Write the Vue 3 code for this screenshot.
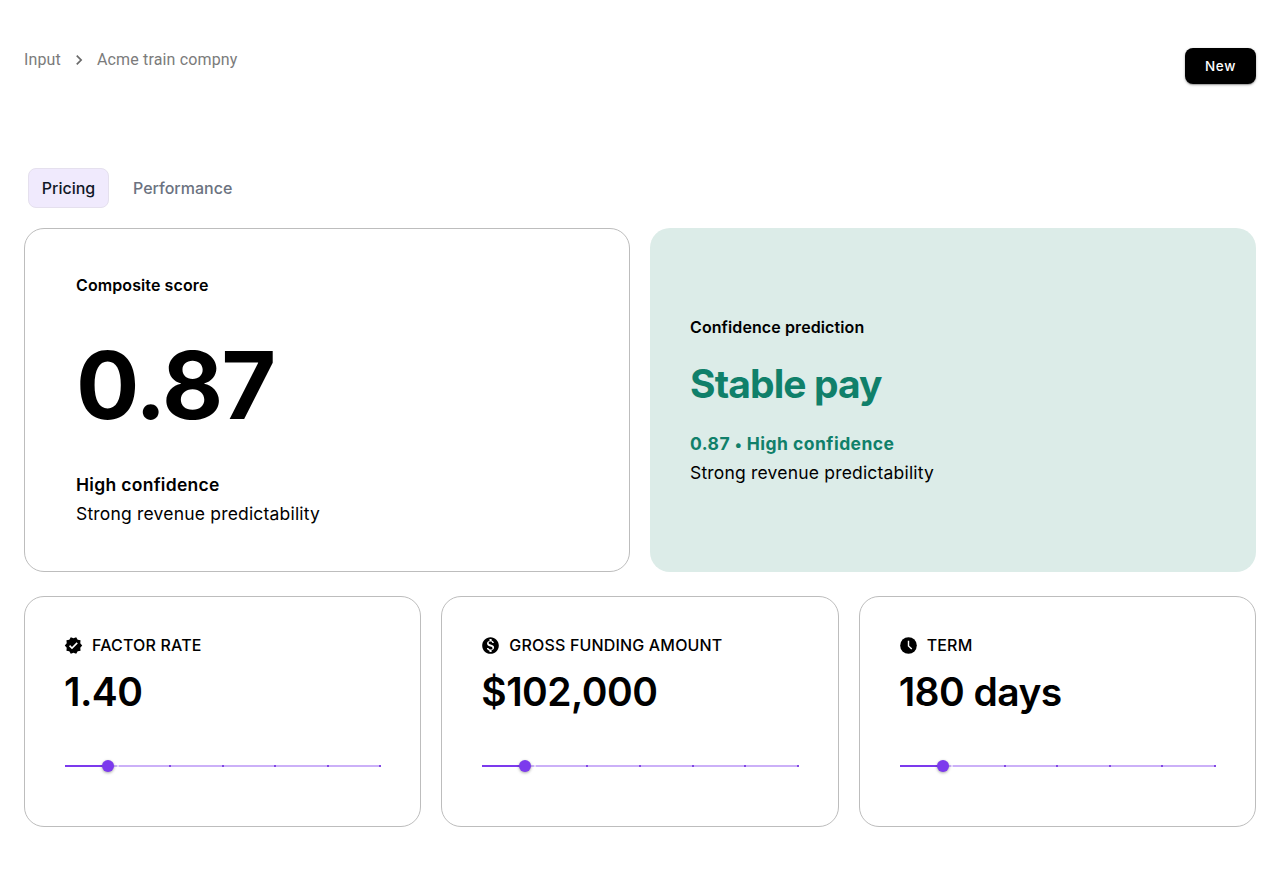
<script setup>
const metrics = [
  { icon: 'verified', label: 'FACTOR RATE', value: '1.40', position: 13.6 },
  { icon: 'dollar', label: 'GROSS FUNDING AMOUNT', value: '$102,000', position: 13.6 },
  { icon: 'clock', label: 'TERM', value: '180 days', position: 13.6 },
]
const marks = [1, 2, 3, 4, 5, 6]
</script>

<template>
  <main class="page">
    <header class="topbar">
      <nav class="crumbs">
        <span class="crumb-root">Input</span>
        <svg class="chevron" viewBox="0 0 24 24"><path d="M10 6 8.59 7.41 13.17 12l-4.58 4.59L10 18l6-6z" /></svg>
        <span class="crumb-leaf">Acme train compny</span>
      </nav>
      <button class="new">New</button>
    </header>

    <div class="tabs">
      <button class="tab active">Pricing</button>
      <button class="tab second">Performance</button>
    </div>

    <section class="summary">
      <article class="card score">
        <h2 class="label">Composite score</h2>
        <p class="big">0.87</p>
        <p class="strong">High confidence</p>
        <p class="note">Strong revenue predictability</p>
      </article>
      <article class="card prediction">
        <h2 class="label">Confidence prediction</h2>
        <p class="headline">Stable pay</p>
        <p class="strong green">0.87 <span class="dot">•</span> High confidence</p>
        <p class="note">Strong revenue predictability</p>
      </article>
    </section>

    <section class="metrics">
      <article v-for="m in metrics" :key="m.label" class="card metric">
        <h3 class="metric-label">
          <svg v-if="m.icon === 'verified'" class="icon" viewBox="0 0 24 24"><path d="m23 12-2.44-2.79.34-3.69-3.61-.82-1.89-3.2L12 2.96 8.6 1.5 6.71 4.69 3.1 5.5l.34 3.7L1 12l2.44 2.79-.34 3.7 3.61.82L8.6 22.5l3.4-1.47 3.4 1.46 1.89-3.19 3.61-.82-.34-3.69zm-12.91 4.72-3.8-3.81 1.48-1.48 2.32 2.33 5.85-5.87 1.48 1.48z" /></svg>
          <svg v-else-if="m.icon === 'dollar'" class="icon" viewBox="0 0 24 24"><path d="M12 1.5C6.2 1.5 1.5 6.2 1.5 12S6.2 22.5 12 22.5 22.5 17.8 22.5 12 17.8 1.5 12 1.5zm1.410 17v1.670h-2.670v-1.690c-1.710-.36-3.160-1.460-3.270-3.400h1.960c.1 1.050.82 1.870 2.650 1.870 1.960 0 2.400-.98 2.400-1.590 0-.83-.44-1.610-2.670-2.140-2.480-.6-4.180-1.620-4.180-3.670 0-1.720 1.390-2.840 3.110-3.210V3.830h2.670v1.710c1.860.45 2.790 1.860 2.850 3.390h-1.960c-.05-1.110-.64-1.870-2.220-1.870-1.500 0-2.400.68-2.400 1.640 0 .84.65 1.390 2.670 1.910s4.180 1.390 4.180 3.910c-.01 1.830-1.380 2.830-3.120 3.160z" /></svg>
          <svg v-else class="icon" viewBox="0 0 24 24"><circle cx="12" cy="12" r="10.5" /><path class="hands" d="M12 6v6.500l4.100 4" /></svg>
          <span>{{ m.label }}</span>
        </h3>
        <p class="value">{{ m.value }}</p>
        <div class="slider">
          <i class="fill" :style="{ width: m.position + '%' }"></i>
          <i v-for="n in marks" :key="n" class="mark" :class="{ pale: n === 1 }" :style="{ left: n / 6 * 100 + '%' }"></i>
          <i class="thumb" :style="{ left: m.position + '%' }"></i>
        </div>
      </article>
    </section>
  </main>
</template>

<style>
body { background: #fff; }
</style>

<style scoped>
* { box-sizing: border-box; }
h2, h3, p { margin: 0; }
.page { padding: 48px 24px; color: #000; font-family: Inter, "Liberation Sans", sans-serif; }
.topbar { display: flex; justify-content: space-between; align-items: flex-start; height: 120px; }
.crumbs { display: flex; align-items: center; height: 24px; font: 400 16px/24px Roboto, sans-serif; letter-spacing: .15px; color: #7b7b7b; }
.chevron { width: 20px; height: 20px; margin: 0 8px; fill: #6b6b6b; }
.new { width: 71px; height: 36px; padding: 0; border: 0; border-radius: 8px; background: #000; color: #fff; font: 500 13.5px/24px Inter, sans-serif; letter-spacing: .7px; box-shadow: 0 1px 3px rgba(0,0,0,.28), 0 1px 1px rgba(0,0,0,.2); }
.tabs { display: flex; gap: 10px; height: 60px; padding-left: 4px; }
.tab { height: 40px; padding: 0 13px; border: 1px solid transparent; border-radius: 8px; background: none; color: #6b7280; font: 500 16px/24px Inter, sans-serif; }
.active { width: 81px; padding: 0; background: #f0eafd; border-color: #e5e0ee; color: #111827; }
.card { border: 1px solid #bdbdbd; border-radius: 20px; }
.summary { display: grid; grid-template: 344px / 1fr 1fr; gap: 20px; }
.score { padding: 44px 51px 0; }
.label { font-size: 16px; line-height: 24px; font-weight: 600; letter-spacing: .1px; }
.big { margin-top: 28px; font-size: 94px; line-height: 120px; font-weight: 700; letter-spacing: -1.7px; }
.strong { margin-top: 25px; font-size: 17.5px; line-height: 29px; font-weight: 600; letter-spacing: .3px; }
.note { font-size: 17.5px; line-height: 29px; letter-spacing: .19px; }
.prediction { border: 0; background: #dcece8; padding: 87px 40px 0; }
.headline { margin-top: 21px; color: #10806a; font-size: 39px; line-height: 48px; font-weight: 700; letter-spacing: -.9px; }
.green { height: 29px; margin-top: 21px; color: #10806a; font-weight: 650; letter-spacing: .46px; }
.dot { font-size: 15px; line-height: 1; }
.metrics { display: grid; grid-template: 231px / repeat(3, 1fr); gap: 20px; margin-top: 24px; }
.metric { padding: 36px 40px 0; }
.metric-label { display: flex; align-items: center; gap: 8px; font-size: 16px; line-height: 24px; font-weight: 500; letter-spacing: .17px; }
.icon { width: 19px; height: 19px; margin: 0 1px 0 -1px; fill: #000; }
.icon .hands { fill: none; stroke: #fff; stroke-width: 1.8; }
.value { margin: 11px 0 0 -1px; font-size: 39px; line-height: 48px; font-weight: 600; letter-spacing: -.55px; }
.slider { position: relative; height: 2px; margin-top: 49px; background: #cbb0f8; }
.fill { position: absolute; inset: 0 auto 0 0; background: #7c3aed; }
.mark { position: absolute; top: 0; width: 2px; height: 2px; margin-left: -1px; background: #8248e5; }
.pale { background: #e6dafb; }
.thumb { position: absolute; top: -5px; width: 12px; height: 12px; margin-left: -6px; border-radius: 50%; background: #7c3aed; box-shadow: 0 1px 3px rgba(0,0,0,.35); }
</style>
